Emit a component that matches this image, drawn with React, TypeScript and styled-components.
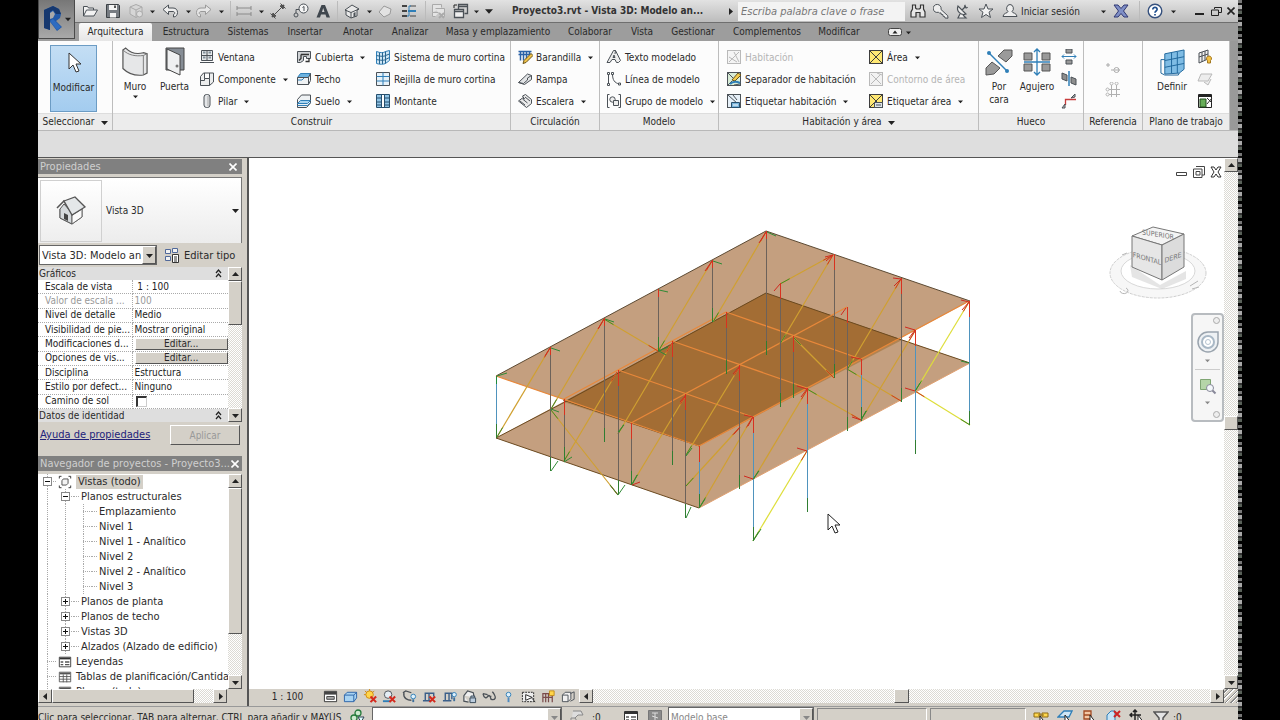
import React from "react";
import styled, { createGlobalStyle, css } from "styled-components";

const Global = createGlobalStyle`
  * { box-sizing: border-box; }
  html, body { margin: 0; height: 100%; overflow: hidden; background: #000; }
  body, button, input, select, table {
    font-family: "DejaVu Sans Condensed", "DejaVu Sans", "Noto Sans", sans-serif;
    font-size: 11px; color: #2a2a2a;
  }
  button { border: 0; padding: 0; margin: 0; background: none; }
  ul { list-style: none; margin: 0; padding: 0; }
  svg { display: block; flex: none; }
`;

/* ---------- icons ---------- */

const K = "#4b5157";
const B = "#2f7fb8";
const L = "#a9d4f0";
const G = "#b9b9b9";
const pane = (c: string, f: string) => <rect x="1.5" y="1.5" width="13" height="13" fill={f} stroke={c} />;

const icons: Record<string, React.ReactNode> = {
  open: <path d="M1.500 13V3.500h4l1 1.500h5v2M1.500 13l3-6h11l-3.500 6z" fill="#f2f2f2" stroke={K} />,
  save: <><path d="M1.500 1.500h12l1 1v12h-13z" fill="#777c82" stroke="#3d4246" /><path d="M4 2h8v5H4zM5 10h6v4.500H5z" fill="#f4f4f4" /><path d="M9 2.500h2V5H9z" fill="#555" /></>,
  box: <><path d="M8 1.500l6 2.500v7l-6 3.500-6-3.500V4z" fill="#d6d6d6" stroke="#aaa" /><path d="M2 4l6 3 6-3M8 7v7.500" fill="none" stroke="#aaa" /><circle cx="11.500" cy="11" r="3" fill="#ddd" stroke="#aaa" /></>,
  undo: <path d="M1 6.500L6.500 2v3H11c3 0 4.500 2 4.500 4.500S14 14 11.500 14v-2.500c2-.5 1.500-3-.5-3H6.500v3z" fill="#eee" stroke={K} />,
  redo: <path d="M15 6.500L9.500 2v3H5C2 5 .5 7 .5 9.500S2 14 4.500 14v-2.500c-2-.5-1.500-3 .5-3h4.500v3z" fill="#e6e6e6" stroke="#9a9a9a" />,
  dim: <path d="M1 5h14M1 3v4M15 3v4M1 11h14M1 9v4M15 9v4" stroke="#8a8a8a" fill="none" />,
  measure: <path d="M4 12l8-8M2 14l1-4 3 3zM14 2l-1 4-3-3zM0.500 10.500l5 5M10.500 .5l5 5" stroke="#4c4c4c" fill="#555" />,
  tag: <><circle cx="10.500" cy="5.500" r="4.500" fill="#f4f4f4" stroke={K} /><path d="M9.500 4.500l1.500-1V8M6 6.500H3V10" stroke={K} fill="none" /><circle cx="3" cy="12" r="2" fill="none" stroke={K} /></>,
  letter: <path d="M1.500 14.500L6.500 2h3.500L15 14.500h-3.500l-1-3H6l-1 3zM7 9h2.500L8.200 5z" fill="#3f464d" fillRule="evenodd" />,
  home: <><path d="M1 7l7-5 7 4-2 1v6l-6 2-5-3V7z" fill="#e8e8e8" stroke={K} /><path d="M1 7l6 2.500L15 6M7 9.500V15" stroke={K} fill="none" /><path d="M9.500 14v-4l2-1v4.500z" fill={K} /></>,
  diamond: <path d="M2 9l5-6 7 3-1 5-6 3z" fill="#e2e2e2" stroke="#9a9a9a" />,
  lines: <><path d="M1 3h5M1 8h5M1 13h5" stroke="#444" strokeWidth="2" /><path d="M9 3h6M9 13h6" stroke="#444" /><path d="M7 8h8" stroke={B} strokeWidth="2" /><path d="M6 13h2V3h2" stroke={B} fill="none" /></>,
  closeWin: <><path d="M2.500 9.500v-8h9v3M5.500 13.500h-3v-4h6M5.500 5.500h9v8h-4" fill="#e4e4e4" stroke="#aaa" /><path d="M9 10l5 5M14 10l-5 5" stroke="#aaa" strokeWidth="2" /></>,
  switchWin: <><path d="M1.500 6.500h9v8h-9zM1.500 8.500h9" fill="#eee" stroke={K} strokeWidth="1.300" /><path d="M5.500 6V1.500h9v9h-3M5.500 3.500h9" fill="none" stroke={K} strokeWidth="1.300" /><path d="M1 5V2h3" stroke="#222" fill="none" /></>,
  binoculars: <path d="M2.500 2h3v3l1 1h3l1-1V2h3v4l1.500 3v5h-5V9.500H6V14H1V9l1.500-3z" fill="#e8e8e8" stroke="#333" strokeWidth="1.200" />,
  key: <path d="M8 6.500a4 4 0 1 0-2.500 2.700l1 1 1.500-.3.300 1.600 1.500 0 .3 1.800 1.400.2.500 1.500 3 .2-.3-2.500z" fill="#eee" stroke={K} />,
  dish: <path d="M3 3c-2 5 3 10 8 8zM7 7l4-4M10.500 2a1.500 1.500 0 1 0 2 2M5 11l-2 4h8l-3-3" fill="#eee" stroke={K} strokeWidth="1.200" />,
  star: <path d="M8 1l2 5h5l-4 3.200 1.500 5.300L8 11.500l-4.500 3L5 9.200 1 6h5z" fill="#f2f2f2" stroke={K} />,
  person: <path d="M8 1.500a3.500 4 0 0 1 2 7.200c0 1.300 5 1.300 5 4.800H1c0-3.500 5-3.500 5-4.800A3.500 4 0 0 1 8 1.500z" fill="#eee" stroke={K} />,
  exchange: <path d="M1 2h4l3 3.500L11 2h4l-4.500 6 4.500 6h-4l-3-3.500L5 14H1l4.500-6z" fill="#7f8fc6" stroke="#2f3672" />,
  help: <><circle cx="8" cy="8" r="6.800" fill="#fff" stroke="#35507d" strokeWidth="1.400" /><path d="M5.800 6.500c0-3 4.500-2.800 4.300 0C10 8 8 8 8 9.700M8 11v1.500" fill="none" stroke="#1f4f8f" strokeWidth="1.700" /></>,
  ventana: <><path d="M2.500 1.500h11v10h-11zM1 13.500h14M2.500 6.500h11M8 2v9.500" fill="#e6e9eb" stroke={K} /><path d="M4 3.500h2.500M9.500 3.500H12M4 8.500h2.500M9.500 8.500H12" stroke="#83929c" strokeWidth="2" /></>,
  componente: <path d="M1.500 5.500l3-3.500h10v9l-4 3.500h-9zM5.500 2v5.500h5V2M1.500 9.500h4v-2M10.500 7.500v7" fill="#eceded" stroke={K} />,
  pilar: <><rect x="5" y="1.500" width="6" height="13" rx="2.500" fill="#e4e6e8" stroke={K} /><path d="M9 3v10" stroke="#aaa" /></>,
  cubierta: <><path d="M1.500 2.500h13v7h-4v-2h-3v4l-3 2h-3z" fill="#d0d3d6" stroke={K} /><path d="M5 5.500h8M5 5.500v4l-2 2M13 9v3.500H9.500" stroke="#333" strokeWidth="1.300" fill="none" /></>,
  techo: <><path d="M1.500 6.500l3-4h10l-2 4z" fill="#6bb2e0" stroke={B} /><path d="M1.500 6.500h11v7h-11zM12.500 6.500l2-4v7l-2 4" fill="#eef1f3" stroke={K} /><path d="M2 9l4 0 2-2" stroke={B} fill="none" /></>,
  suelo: <><path d="M1.500 6.500l4-4.500h9v8l-4 4.500h-9z" fill="#eef1f3" stroke={K} /><path d="M1.500 10.500l3-3h10l-3 3z" fill={L} stroke={B} /><path d="M1.500 12.500h10l3-3" fill="none" stroke={B} /></>,
  sistema: <><path d="M1.500 2.500c4 1.500 7 1.500 9 0l4-1v10l-4 3c-2 1-6 1-9 0z" fill="#cfe6f5" stroke={B} /><path d="M4.500 3.500V15M7.500 3.500V15M10.500 2.500v12M1.500 6.500c4 1 8 1 9 0l4-1.500M1.500 10.500c4 1 8 1 9 0l4-2" stroke="#27658f" fill="none" /></>,
  rejilla: <><path d="M1.500 1.500h13v13h-13z" fill="#e6f1f8" stroke={K} /><path d="M8 1.500v13M1.500 5.500h13M1.500 10h13" stroke={B} fill="none" /></>,
  montante: <><path d="M1.500 1.500h13v13h-13z" fill="#8fc4e6" stroke="#27506e" /><path d="M6.500 1.500v13M9.500 1.500v13M1.500 5h13M1.500 9h5M9.500 9h5M1.500 12h13" stroke="#274f6e" /><path d="M7 2h2v12H7z" fill="#fff" /></>,
  barandilla: <><path d="M1.500 2.500h13M1.500 5.500h13M3.500 2.500v9M6.500 2.500v9M9.500 2.500v8M12.500 2.500v4" stroke="#2a62a8" fill="none" strokeWidth="1.500" /><path d="M6 14.500l1-3 7-7 2 2-7 7z" fill="#f0c24a" stroke="#6b5316" /></>,
  rampa: <><path d="M1.500 11.500l9-8.500 4 1.500v4l-7 5z" fill="#e2e4e6" stroke={K} /><path d="M1.500 11.500l5 1 4-3.500v-2l4-2.500" stroke={K} fill="none" /></>,
  escalera: <path d="M1.500 8l4-3 2 1-2-3 3-1.500 6 5v4l-5 4zM3 8l5 4M5.500 6l5 4M8 4l5 4" fill="#eaeaea" stroke={K} />,
  texto: <path d="M1 13.500L7.500 1.500h2l5 10-2 2h-2l-1.500-3H6l-2 3zM7 8.500h2L8 6zM9.500 1.500L9 5" fill="#eee" stroke={K} fillRule="evenodd" />,
  linea: <><path d="M2.500 3v10M6.500 3c0 6 2 9 7 10" stroke={K} fill="none" /><path d="M1.500 1.500h2v2h-2zM1.500 12.500h2v2h-2zM5.500 1.500h2v2h-2zM12.500 12h2v2h-2z" fill="#fff" stroke={K} /></>,
  grupo: <><path d="M3.500 1.500h-2v13h2M12.500 1.500h2v13h-2" stroke={K} fill="none" /><circle cx="6.500" cy="6.500" r="2.700" fill="#eee" stroke={K} /><path d="M7.500 7.500h5v5h-5z" fill="#eee" stroke={K} /></>,
  habitacion: <>{pane(G, "#f4f4f4")}<path d="M3 13L13 3M8 3l5 10M3 8l8 5" stroke={G} /></>,
  separador: <>{pane(K, "#d8ecd6")}<path d="M2 2l5 5M2 14l4-4M8 14l6-1" stroke={K} /><path d="M6 9l6-7 3 2-6 6z" fill="#f2cc4e" stroke="#6b5316" /><path d="M4 13c3-3 6-3 10-1" stroke={B} strokeWidth="2" fill="none" /></>,
  etiquetar: <>{pane(K, "#e6f0f8")}<path d="M2 2l10 9M7 2l4 5" stroke={K} /><path d="M5.500 9.500h8v5h-8z" fill="#78b4dc" stroke="#27506e" /><path d="M7 12h5" stroke="#fff" /></>,
  area: <>{pane("#3d3d3d", "#ffe873")}<path d="M2 2l12 12M14 2L2 14" stroke="#3d3d3d" /></>,
  contorno: <>{pane(G, "#f2f2f2")}<path d="M3 3l5 5 5-5M3 13l5-5 5 5M9 2l5 2" stroke={G} fill="none" /></>,
  etiquetarArea: <>{pane("#3d3d3d", "#ffe873")}<path d="M2 2l12 12M14 2L2 14" stroke="#3d3d3d" /><path d="M6.500 9.500h8v5h-8z" fill="#dfe5ea" stroke={K} /><path d="M8 12h5" stroke={K} /></>,
  buhardilla: <><path d="M4.500 12V6.500H15" stroke="#c83c3c" fill="none" strokeWidth="1.300" /><path d="M1 15l3-4v4zM10 5l4-4v3z" fill="#bbb" stroke={K} /></>,
  muroHueco: <><path d="M5 0h6v4H5zM5 11h6v4H5z" fill="#999" stroke={K} /><path d="M1 7.500h14M3 5.500l-2 2 2 2M13 5.500l2 2-2 2" stroke={B} fill="none" /></>,
  vertical: <><path d="M1 2l5 2v6L1 8zM10 6l5 2v6l-5-2z" fill="#8e8e8e" stroke={K} /><path d="M8 0v15" stroke={B} strokeWidth="1.500" /></>,
  mostrar: <><path d="M2 4l9-3v9l-9 4zM2 8l9-3M5 3v10M8 2v9" fill="#eee" stroke={K} /><path d="M12 7a2.500 2.500 0 0 1 1.500 4.500V14h-3v-2.500A2.500 2.500 0 0 1 12 7z" fill="#f5c243" stroke="#a37820" /></>,
  planoRef: <path d="M4 3h11l-4 7H1zM7 11l4 3 3-6" fill="#ededed" stroke={G} />,
  visor: <><path d="M1.500 1.500h13v13h-13z" fill="#fff" stroke="#222" /><path d="M1.500 3h13" stroke="#222" strokeWidth="2" /><path d="M3 6h6v8H3z" fill="#67ad58" stroke="#234d1d" /><path d="M10 5l5 5M15 5l-5 6" stroke="#333" /></>,
  refLine: <><path d="M1 5h4M3 3v4M6 10h3" stroke="#aaa" fill="none" /><circle cx="11.500" cy="10" r="2.500" fill="none" stroke="#aaa" /><path d="M10 10h5" stroke="#aaa" /></>,
  refGrid: <path d="M6.500 3v12M11.500 3v12M4 7.500h11M4 12.500h11M2.500 6a1.500 1.500 0 1 0 .1 0zM2.500 11a1.500 1.500 0 1 0 .1 0zM6.500 0a1.500 1.500 0 1 0 .1 0zM11.500 0a1.500 1.500 0 1 0 .1 0z" stroke="#b0b0b0" fill="none" />,
  editType: <><path d="M1.500 2.500h5v4h-5zM8.500 1.500h5v4h-5zM1.500 9.500h5v4h-5z" fill="#f2f2f2" stroke="#51699a" /><path d="M8.500 7.500h6v8h-6zM10 10h3M10 12h3M10 14h3" fill="#fff" stroke="#333" /></>,
  views: <><path d="M1.500 4V1.500H4M12 1.500h2.500V4M14.500 12v2.500H12M4 14.500H1.500V12" fill="none" stroke="#222" /><path d="M4.500 6.500L6 4.500h5.500v5l-2 2h-5z" fill="#f4f4f4" stroke="#444" /></>,
  legend: <><path d="M1.500 2.500h13v11h-13z" fill="#fff" stroke="#333" /><path d="M2 4h12" stroke="#333" strokeWidth="2" /><path d="M3 8h3M3 11h3M8 8h5M8 11h5" stroke="#555" strokeWidth="1.500" /></>,
  sheet: <><path d="M1.500 2.500h13v11h-13zM1.500 7.500h13M1.500 10.500h13M6 5v9M10 5v9" fill="#fff" stroke="#555" /><path d="M2 4h12" stroke="#555" strokeWidth="2" /></>,
  detail: <><path d="M1.500 2.500h13v11h-13z" fill="#fff" stroke="#333" /><path d="M2 4.500h12" stroke="#444" strokeWidth="3" /><path d="M4 8h8v3H4z" fill="#aaa" stroke="#444" /></>,
  style: <><path d="M1.500 6.500l3-3h10v6l-3 4h-10z" fill="#a8d3f2" stroke="#2b62a8" /><path d="M1.500 6.500h10v7M11.500 6.500l3-3" stroke="#2b62a8" fill="none" /></>,
  sun: <><circle cx="7" cy="6" r="4" fill="#ffd54a" stroke="#d08a10" /><path d="M7 0v2M1 6h2M2 2l2 2M12 2l-2 2" stroke="#d08a10" /><path d="M8 8l6 6M14 8l-6 6" stroke="#d42a1e" strokeWidth="2.200" /></>,
  shadow: <><circle cx="6.500" cy="6" r="4" fill="#e4eef5" stroke={K} /><path d="M1 13h8" stroke={B} strokeWidth="2" /><path d="M8 8l6 6M14 8l-6 6" stroke="#d42a1e" strokeWidth="2.200" /></>,
  path: <><path d="M1 4l3-2 6 2M2 4c-1 6 4 8 8 8" fill="none" stroke={K} strokeWidth="1.400" /><circle cx="12" cy="8" r="2.500" fill="#dff0fb" stroke={B} /><path d="M11 11h2v3h-2z" fill="#3e6f9b" /></>,
  cropX: <><path d="M3.500 13V4.500h4V13M1 12.500h9M7.500 4.500h5V8" stroke="#3b5f8a" strokeWidth="1.500" fill="none" /><path d="M8 8l6 6M14 8l-6 6" stroke="#d42a1e" strokeWidth="2.200" /></>,
  cropB: <><path d="M3.500 13V4.500h4V13M1 12.500h9M7.500 4.500h3V11" stroke="#3b5f8a" strokeWidth="1.500" fill="none" /><circle cx="13" cy="6" r="2.300" fill="#dff0fb" stroke={B} /><path d="M12 9h2v4h-2z" fill="#3e6f9b" /></>,
  lock: <><path d="M2 7l4-5 6 2 1 5M2 7v6l5 1" fill="#eee" stroke={K} strokeWidth="1.300" /><path d="M8.500 9.500h6v5h-6zM9.500 9V7.500h4V9" fill="#bcd" stroke="#345" /></>,
  glasses: <path d="M1 5l5 1M1 5c1 5 4 5 5 3 1-2 3-1 3 1 0 3 4 3 5 1s-2-6-3-7M6 7l4 1" fill="none" stroke={K} strokeWidth="1.400" />,
  bulb: <><circle cx="8" cy="6" r="2.500" fill="#dff0fb" stroke={B} /><path d="M7 9h2v5H7z" fill="#4d8ac0" /></>,
  film: <><path d="M1.500 3.500h12v10h-12z" fill="#eee" stroke="#222" strokeDasharray="2 1" /><path d="M5 6l7 3-7 3zM12 10l3 4" fill="#fff" stroke="#222" /></>,
  analytic: <><path d="M2 14V5h10v9M5 5v9M8 5v9M2 9h10" fill="none" stroke="#7a4a4a" strokeWidth="1.300" /><path d="M9 2h5v5H9z" fill="#ffd54a" stroke="#c38d1a" /></>,
  cubes: <><path d="M1.500 6.500l3-3h6v7l-3 3h-6zM1.500 6.500h6v7" fill="#f0f0f0" stroke={K} /><path d="M10 5l4-2v8l-4 2" fill="none" stroke={K} /></>,
  sync: <><circle cx="8" cy="4" r="3" fill="#cfe9cf" stroke="#257a3b" strokeWidth="1.300" /><circle cx="4" cy="9" r="3" fill="#cfe9cf" stroke="#257a3b" strokeWidth="1.300" /><path d="M8 8h6l-3 5z" fill="#dff" stroke="#345" /></>,
  cursorTag: <path d="M4 2h8l2 4H9l-3 3H2v5M6 9l4 6" fill="#ddd" stroke="#888" />,
  book: <><path d="M1.500 1.500h13v13h-13z" fill="#8b8b8b" stroke="#777" /><path d="M5 4h6M5 7l6 2M8 4v9" stroke="#ddd" /></>,
  selLink: <><path d="M1 4h6v4H1zM9 4h6v4H9zM5 6h6" fill="#ffd84f" stroke="#8e6b12" /><path d="M7 7v9l2-2 4 1z" fill="#fff" stroke="#222" /></>,
  selUnder: <><path d="M1 8l6-6h8l-3 6zM3 12h6" fill="#cfe6f5" stroke={B} strokeWidth="1.300" /><path d="M8 6v9l2-2 4 1z" fill="#fff" stroke="#222" /></>,
  selPin: <><path d="M3 2h7v8H3zM1 12h9M3 6h7" fill="#f3c8a6" stroke="#a24b22" strokeWidth="1.300" /><path d="M9 6v9l2-2 4 1z" fill="#fff" stroke="#222" /></>,
  selFace: <><path d="M2 14V6l4-4h4v9l-4 4z" fill="#c6e3f5" stroke={B} /><path d="M9 2l6 6M15 2L9 8" stroke="#cc2424" strokeWidth="2" /></>,
  drag: <><path d="M6 1v11M1 6h11M4 3l2-2 2 2M3 4L1 6l2 2" stroke="#222" strokeWidth="1.500" fill="none" /><path d="M9 6v9l2-2 4 1z" fill="#fff" stroke="#222" /></>,
  filter: <path d="M1 3h14l-5 6v6l-4-2V9z" fill="#e4e4e4" stroke="#555" strokeWidth="1.500" />,
};

const Icon = ({ n, size = 16 }: { n: string; size?: number }) => (
  <svg width={size} height={size} viewBox="0 0 16 16" aria-hidden="true">{icons[n]}</svg>
);

type Dir = "down" | "up" | "left" | "right";
const dirs: Record<Dir, string> = { down: "M0 2h7L3.500 6z", up: "M0 5h7L3.500 1z", left: "M5 0v7L1 3.500z", right: "M2 0v7l4-3.500z" };
const Caret = ({ dir = "down", size = 7, color = "#222" }: { dir?: Dir; size?: number; color?: string }) => (
  <svg width={size} height={size} viewBox="0 0 7 7" aria-hidden="true"><path d={dirs[dir]} fill={color} /></svg>
);

/* ---------- frame ---------- */

const Screen = styled.div`
  display: flex; height: calc(100vh + 7px); padding-right: 38px; padding-left: 38px; background: #000;
`;
const AppWindow = styled.div`
  flex: 1; min-width: 0; display: flex; flex-direction: column; background: #dedede;
`;
const EdgeNoise = styled.div`
  flex: 0 0 4px;
  background: repeating-linear-gradient(#777 0 3px, #111 3px 5px, #aaa 5px 9px, #333 9px 11px, #586058 11px 14px, #000 14px 17px);
`;

const Header = styled.header`display: flex; height: 41px; background: #9d9d9d;`;
const AppButton = styled.button`
  flex: 0 0 37px; height: 39px; display: flex; align-items: center; justify-content: center; gap: 2px;
  background: linear-gradient(#777, #a9a9a9); border: 1px solid #4a4a4a; border-top: 0;
`;
const HeaderRows = styled.div`flex: 1; min-width: 0; display: flex; flex-direction: column;`;
const TitleBar = styled.div`
  display: flex; align-items: center; height: 23px; padding-left: 4px;
  background: linear-gradient(#e2e2e2, #bcbcbc); border-bottom: 1px solid #6f6f6f;
`;
const BarButton = styled.button<{ $w: number }>`
  flex: 0 0 ${(p) => p.$w}px; height: 20px; display: flex; align-items: center; justify-content: center;
`;
const BarDivider = styled.span<{ $w: number }>`
  flex: 0 0 ${(p) => p.$w}px; height: 20px; background: linear-gradient(#bbb, #bbb) center / 1px 100% no-repeat;
`;
const Title = styled.h1`
  flex: 1; min-width: 0; margin: 0 6px 0 13px; font-size: 10px; line-height: 20px; font-weight: bold; color: #333;
  white-space: nowrap; overflow: hidden;
`;
const Search = styled.input`
  flex: 0 0 167px; height: 19px; border: 0; padding: 0 3px; font-size: 11px; font-style: italic; background: #f3f3f3;
  &::placeholder { color: #777; opacity: 1; }
`;
const SignIn = styled.button`
  flex: 0 0 101px; display: flex; align-items: center; gap: 3px; padding-left: 5px; font-size: 10px; height: 20px;
`;
const WindowButtons = styled.div`display: flex; flex: 0 0 58px; padding-left: 12px;`;

const TabRow = styled.nav`
  display: flex; align-items: flex-end; height: 18px;
`;
const Tab = styled.button<{ $w: number; $active?: boolean }>`
  flex: 0 0 ${(p) => p.$w}px; height: 18px; font-size: 10px; line-height: 18px; white-space: nowrap;
  ${(p) => p.$active && css`background: linear-gradient(#fafafa, #e6e6e6); border-radius: 2px 2px 0 0;`}
`;
const TabToggle = styled.button`
  display: flex; align-items: center; gap: 4px; height: 18px; margin-left: 20px;
`;

/* ---------- ribbon ---------- */

const Ribbon = styled.div`
  display: flex; height: 90px; border-bottom: 1px solid #b8b8b8; background: linear-gradient(90deg, #c8c8c8, #999);
`;
const PanelBox = styled.section<{ $w: number; $grow?: boolean }>`
  flex: ${(p) => (p.$grow ? 1 : 0)} 0 ${(p) => p.$w}px; display: flex; flex-direction: column; background: #fcfcfc;
  border-right: 1px solid #bdbdbd;
`;
const PanelBody = styled.div<{ $left: number }>`
  flex: 1; display: flex; padding: 4px 0 0 ${(p) => p.$left}px;
`;
const PanelName = styled.h2`
  margin: 0; height: 17px; font-size: 10px; line-height: 14px; font-weight: normal; background: #ececec; border-top: 1px solid #ddd;
  display: flex; align-items: center; justify-content: center; gap: 6px; white-space: nowrap;
`;
const ToolColumn = styled.div<{ $w: number; $top?: number }>`
  flex: 0 0 ${(p) => p.$w}px; display: flex; flex-direction: column; padding-top: ${(p) => p.$top ?? 1}px;
`;
const Tool = styled.button`
  height: 22px; display: flex; align-items: center; gap: 3px; font-size: 10px; white-space: nowrap; text-align: left;
  &:disabled { color: #b4b4b4; }
`;
const ToolArrow = styled.span`padding-left: 4px;`;
const BigTool = styled.button<{ $w: number; $on?: boolean }>`
  flex: 0 0 ${(p) => p.$w}px; height: 67px; display: flex; flex-direction: column; align-items: center; font-size: 10px;
  line-height: 13px; gap: 1px;
  ${(p) => p.$on && css`background: linear-gradient(#c4def4, #a3ccef); border: 1px solid #6c9cc4;`}
`;
const BigArt = styled.span`height: 34px; display: flex; align-items: center; justify-content: center;`;
const OptionsBar = styled.div`height: 27px; flex: none; border-bottom: 1px solid #555;`;

type ToolDef = { n: string; t?: string; arrow?: boolean; off?: boolean };
const Tools = ({ w, items }: { w: number; items: ToolDef[] }) => (
  <ToolColumn $w={w}>
    {items.map((i) => (
      <Tool key={i.n} disabled={i.off} aria-label={i.t ?? i.n}>
        <Icon n={i.n} />{i.t}{i.arrow && <ToolArrow><Caret size={5} /></ToolArrow>}
      </Tool>
    ))}
  </ToolColumn>
);

const Panel = ({ name, w, left, more, grow, children }: {
  name: string; w: number; left: number; more?: boolean; grow?: boolean; children: React.ReactNode;
}) => (
  <PanelBox $w={w} $grow={grow}>
    <PanelBody $left={left}>{children}</PanelBody>
    <PanelName>{name}{more && <Caret />}</PanelName>
  </PanelBox>
);

/* ---------- classic controls ---------- */

const raised = css`
  background: #d4d0c8; border: 1px solid; border-color: #fff #555 #555 #fff;
`;
const hatch = css`background: repeating-conic-gradient(#fff 0 25%, #dcdad4 0 50%) 0 0 / 2px 2px;`;
const VTrack = styled.div<{ $w?: number }>`
  flex: 0 0 ${(p) => p.$w ?? 14}px; display: flex; flex-direction: column; ${hatch}
`;
const HTrack = styled.div`flex: 1; min-width: 0; display: flex; height: 14px; ${hatch}`;
const ArrowButton = styled.button`
  flex: 0 0 14px; min-width: 14px; display: flex; align-items: center; justify-content: center; ${raised}
`;
const Space = styled.span<{ $grow: number }>`flex: ${(p) => p.$grow} 1 0;`;
const Thumb = styled.span<{ $size: number }>`flex: 0 0 ${(p) => p.$size}px; ${raised}`;

/* ---------- left side ---------- */

const Work = styled.div`flex: 1; min-height: 0; display: flex; background: #d4d0c8;`;
const Side = styled.aside`
  flex: 0 0 211px; min-width: 0; display: flex; flex-direction: column; padding: 1px 5px 0 0; border-right: 2px solid #555; min-height: 0;
`;
const PaletteTitle = styled.h3`
  margin: 0; height: 15px; flex: none; display: flex; align-items: center; justify-content: space-between; padding: 0 3px 0 2px;
  background: #808080; color: #cfcfcf; font-size: 11px; line-height: 15px; font-weight: normal; white-space: nowrap;
`;
const CloseButton = styled.button`width: 12px; height: 12px; display: flex; align-items: center; justify-content: center;`;
const TypeSelector = styled.button`
  height: 66px; flex: none; margin-top: 3px; display: flex; align-items: center; padding: 2px; gap: 4px; text-align: left; font-size: 10px;
  background: linear-gradient(#fff, #ececec); border: 1px solid #777; border-width: 1px 1px 0 0;
`;
const TypeThumb = styled.span`
  width: 62px; height: 62px; display: flex; align-items: center; justify-content: center; border: 1px solid #d0d0d0;
  background: linear-gradient(#fff, #eee);
`;
const Fill = styled.span`flex: 1;`;
const InstanceRow = styled.div`display: flex; align-items: center; height: 24px; flex: none; padding: 2px 0 2px 1px;`;
const Combo = styled.label<{ $w: number }>`
  flex: 0 0 ${(p) => p.$w}px; height: 20px; display: flex; background: #fff; border: 1px solid #666;
`;
const ComboSelect = styled.select<{ $dim?: boolean }>`
  flex: 1; min-width: 0; appearance: none; border: 0; padding: 0 0 0 2px; background: #fff; font-size: 11px;
  ${(p) => p.$dim && css`color: #888; font-size: 10px;`}
`;
const EditType = styled.button`display: flex; align-items: center; gap: 4px; padding-left: 7px; font-size: 11px; white-space: nowrap;`;
const PropsArea = styled.div`display: flex; flex: none; height: 155px; overflow: hidden;`;
const PropsList = styled.div`flex: 1; min-width: 0; background: #fff;`;
const GroupRow = styled.div`
  height: 13px; display: flex; align-items: center; justify-content: space-between; padding: 0 6px 0 1px; background: #dedede; font-size: 10px;
  line-height: 13px;
`;
const PropTable = styled.table`
  width: 100%; height: 129px; border-collapse: collapse; table-layout: fixed; font-size: 10px; line-height: 12px;
`;
const PropName = styled.th<{ $dim?: boolean }>`
  width: 94px; padding: 0 0 0 7px; text-align: left; font-weight: normal; white-space: nowrap; overflow: hidden;
  border-bottom: 1px dotted #aaa; border-right: 1px dotted #aaa; color: ${(p) => (p.$dim ? "#999" : "#222")};
`;
const PropValue = styled.td<{ $dim?: boolean }>`
  padding: 0 0 0 2px; border-bottom: 1px dotted #aaa; color: ${(p) => (p.$dim ? "#999" : "#222")};
`;
const EditButton = styled.button`display: block; width: 100%; height: 12px; font-size: 10px; line-height: 10px; ${raised}`;
const Check = styled.input`
  appearance: none; display: block; width: 11px; height: 11px; margin: 0 0 0 1px; background: #fff; border: solid #333; border-width: 2px 1px 1px 2px;
  border-right-color: #ccc; border-bottom-color: #ccc;
`;
const HelpRow = styled.div`
  height: 34px; flex: none; display: flex; align-items: flex-start; justify-content: space-between; padding: 3px 2px 0 2px;
`;
const HelpLink = styled.a`color: #22227a; line-height: 19px; font-size: 11px;`;
const Apply = styled.button`width: 70px; height: 20px; font-size: 10px; ${raised} &:disabled { color: #999; }`;

const Browser = styled.div`flex: 1; min-height: 0; margin-top: 3px; display: flex; background: #fff;`;
const Tree = styled.ul`flex: 1; min-width: 0; overflow: hidden;`;
const TreeItem = styled.li`display: flex; height: 15px; align-items: center; white-space: nowrap; font-size: 11px;`;
const Guide = styled.span<{ $v?: boolean; $h?: boolean; $w?: number }>`
  flex: 0 0 ${(p) => p.$w ?? 18}px; height: 15px; display: flex; align-items: center; justify-content: center;
  background-image: ${(p) => [
    p.$v ? "repeating-linear-gradient(#aaa 0 1px, transparent 1px 2px)" : "none",
    p.$h ? "repeating-linear-gradient(90deg, #aaa 0 1px, transparent 1px 2px)" : "none",
  ].join(",")};
  background-size: 1px 100%, ${(p) => (p.$w ? "100%" : "50%")} 1px;
  background-position: center, right center;
  background-repeat: no-repeat;
`;
const TreeLabel = styled.span<{ $sel?: boolean }>`
  line-height: 14px; padding: 0 2px; ${(p) => p.$sel && css`background: #d4d0c8; margin-left: 2px;`}
`;
const BrowserFoot = styled.div`flex: none; display: flex; height: 17px; padding-bottom: 3px;`;
const FootCorner = styled.span`flex: 0 0 15px;`;

const PlusBox = ({ open }: { open?: boolean }) => (
  <svg width="9" height="9" viewBox="0 0 9 9"><rect x=".5" y=".5" width="8" height="8" fill="#fff" stroke="#888" />
    <path d={open ? "M2 4.500h5" : "M2 4.500h5M4.500 2v5"} stroke="#111" /></svg>
);

type Node = { t: string; lv: 0 | 1 | 2; box?: "open" | "closed"; icon?: string; sel?: boolean };
const nodes: Node[] = [
  { t: "Vistas (todo)", lv: 0, box: "open", icon: "views", sel: true },
  { t: "Planos estructurales", lv: 1, box: "open" },
  { t: "Emplazamiento", lv: 2 }, { t: "Nivel 1", lv: 2 }, { t: "Nivel 1 - Analítico", lv: 2 },
  { t: "Nivel 2", lv: 2 }, { t: "Nivel 2 - Analítico", lv: 2 }, { t: "Nivel 3", lv: 2 },
  { t: "Planos de planta", lv: 1, box: "closed" }, { t: "Planos de techo", lv: 1, box: "closed" },
  { t: "Vistas 3D", lv: 1, box: "closed" }, { t: "Alzados (Alzado de edificio)", lv: 1, box: "closed" },
  { t: "Leyendas", lv: 0, icon: "legend" }, { t: "Tablas de planificación/Cantida", lv: 0, icon: "sheet" },
  { t: "Planos (todo)", lv: 0, icon: "sheet" },
];

const properties: { k: string; v: string; kind?: "edit" | "check" | "dim" }[] = [
  { k: "Escala de vista", v: "\u00a01 : 100" }, { k: "Valor de escala  ...", v: "100", kind: "dim" },
  { k: "Nivel de detalle", v: "Medio" }, { k: "Visibilidad de pie...", v: "Mostrar original" },
  { k: "Modificaciones d...", v: "Editar...", kind: "edit" }, { k: "Opciones de vis...", v: "Editar...", kind: "edit" },
  { k: "Disciplina", v: "Estructura" }, { k: "Estilo por defect...", v: "Ninguno" }, { k: "Camino de sol", v: "", kind: "check" },
];

const Collapse = () => <svg width="7" height="9" viewBox="0 0 7 9"><path d="M1 4l2.500-3L6 4M1 8l2.500-3L6 8" fill="none" stroke="#222" strokeWidth="1.200" /></svg>;
const Cross = ({ c = "#fff" }) => <svg width="8" height="8" viewBox="0 0 8 8"><path d="M.5.5l7 7M7.500.5l-7 7" stroke={c} strokeWidth="1.600" /></svg>;

const SidePanels = () => (
  <Side>
    <PaletteTitle>Propiedades<CloseButton aria-label="Cerrar"><Cross /></CloseButton></PaletteTitle>
    <TypeSelector>
      <TypeThumb>
        <svg width="32" height="32" viewBox="0 0 32 32">
          <path d="M5 14v9l12 6 10-7v-9" fill="#f7f7f7" stroke="#666" />
          <path d="M5 14l4-5 8 9v11L5 23z" fill="#d5d9dc" stroke="#555" />
          <path d="M17 20v9l10-7v-8z" fill="#fafafa" stroke="#666" />
          <path d="M2 13l7-7 8 12" fill="none" stroke="#555" strokeWidth="1.500" /><path d="M9 6l11-4 10 10-13 8z" fill="#e4e7e9" stroke="#555" strokeWidth="1.300" />
          <path d="M9 18l4 2v6l-4-2z" fill="#444" />
        </svg>
      </TypeThumb>
      Vista 3D<Fill /><Caret />
    </TypeSelector>
    <InstanceRow>
      <Combo $w={117}>
        <ComboSelect aria-label="Vista"><option>Vista 3D: Modelo an</option></ComboSelect>
        <ArrowButton as="span"><Caret /></ArrowButton>
      </Combo>
      <EditType><Icon n="editType" />Editar tipo</EditType>
    </InstanceRow>
    <PropsArea>
      <PropsList>
        <GroupRow>Gráficos<Collapse /></GroupRow>
        <PropTable>
          <tbody>
            {properties.map((p) => (
              <tr key={p.k}>
                <PropName scope="row" $dim={p.kind === "dim"}>{p.k}</PropName>
                <PropValue $dim={p.kind === "dim"}>
                  {p.kind === "edit" ? <EditButton>{p.v}</EditButton>
                    : p.kind === "check" ? <Check type="checkbox" aria-label={p.k} /> : p.v}
                </PropValue>
              </tr>
            ))}
          </tbody>
        </PropTable>
        <GroupRow>Datos de identidad<Collapse /></GroupRow>
      </PropsList>
      <VTrack>
        <ArrowButton aria-label="Subir"><Caret dir="up" /></ArrowButton>
        <Thumb $size={44} /><Space $grow={1} />
        <ArrowButton aria-label="Bajar"><Caret /></ArrowButton>
      </VTrack>
    </PropsArea>
    <HelpRow><HelpLink href="#ayuda">Ayuda de propiedades</HelpLink><Apply disabled>Aplicar</Apply></HelpRow>
    <PaletteTitle>Navegador de proyectos - Proyecto3...<CloseButton aria-label="Cerrar"><Cross /></CloseButton></PaletteTitle>
    <Browser>
      <Tree>
        {nodes.map((n) => (
          <TreeItem key={n.t}>
            <Guide $v $h={n.lv === 0}>{n.lv === 0 && n.box && <PlusBox open />}</Guide>
            {n.lv === 0 && n.icon && <Guide><Icon n={n.icon} size={14} /></Guide>}
            {n.lv > 0 && <Guide $v $h={n.lv === 1}>{n.lv === 1 && <PlusBox open={n.box === "open"} />}</Guide>}
            {n.lv === 2 && <Guide $v $h />}
            {n.lv > 0 && <Guide $h $w={5} />}
            <TreeLabel $sel={n.sel}>{n.t}</TreeLabel>
          </TreeItem>
        ))}
      </Tree>
      <VTrack>
        <ArrowButton aria-label="Subir"><Caret dir="up" /></ArrowButton>
        <Thumb $size={146} /><Space $grow={1} />
        <ArrowButton aria-label="Bajar"><Caret /></ArrowButton>
      </VTrack>
    </Browser>
    <BrowserFoot>
      <HTrack>
        <ArrowButton aria-label="Izquierda"><Caret dir="left" /></ArrowButton>
        <Thumb $size={142} /><Space $grow={1} />
        <ArrowButton aria-label="Derecha"><Caret dir="right" /></ArrowButton>
      </HTrack>
      <FootCorner />
    </BrowserFoot>
  </Side>
);

/* ---------- 3D view ---------- */

const ViewColumn = styled.main`flex: 1; min-width: 0; display: flex; flex-direction: column;`;
const ViewMain = styled.div`flex: 1; min-height: 0; display: flex;`;
const Canvas = styled.div`flex: 1; min-width: 0; position: relative; overflow: hidden; background: #fff;`;
const ViewButtons = styled.div`position: absolute; top: 8px; right: 2px; display: flex; gap: 5px;`;
const CubeSpot = styled.div`position: absolute; top: 64px; right: 16px;`;
const NavBar = styled.div`
  position: absolute; top: 155px; right: 0; width: 33px; height: 109px; padding: 2px; display: flex; flex-direction: column; align-items: center;
  justify-content: space-between; border: 2px solid #b8bcc0; border-radius: 4px; background: #f6f6f6;
`;
const NavDot = styled.button`width: 7px; height: 7px; align-self: flex-end; border: 1px solid #aaa; border-radius: 50%; background: #eee;`;
const NavButton = styled.button`display: flex; flex-direction: column; align-items: center; gap: 5px;`;
const NavRule = styled.span`width: 25px; height: 1px; background: #ccc;`;
const ViewBar = styled.div`
  flex: none; display: flex; height: 17px; padding-bottom: 3px; background: #d4d0c8;
`;
const ViewControls = styled.div`flex: 0 0 330px; display: flex; align-items: center; font-size: 10px;`;
const Scale = styled.button`flex: 0 0 74px; font-size: 10px; padding-left: 3px;`;
const ControlIcons = styled.div`flex: 0 0 253px; display: flex; justify-content: space-between;`;
const Grip = styled.span`
  flex: 0 0 14px; background: repeating-linear-gradient(135deg, #d4d0c8 0 2px, #888 2px 3px, #fff 3px 4px);
`;

const at = (i: number, j: number): [number, number] => [Math.round(496 + 54 * i + 67.7 * j), Math.round(376 - 29 * i + 23.3 * j)];

const columns: [number, number, number][] = [
  [0, 0, 62], [1, 0, 124], [2, 0, 124], [3, 0, 62], [4, 0, 62], [5, 0, 124],
  [0, 1, 62], [1, 1, 124], [2, 1, 124], [3, 1, 62], [4, 1, 124], [5, 1, 124],
  [0, 2, 62], [1, 2, 124], [2, 2, 124], [3, 2, 62], [4, 2, 124], [5, 2, 124],
  [0, 3, 62], [1, 3, 124], [2, 3, 124], [3, 3, 62], [4, 3, 124], [5, 3, 124],
];

const braces: [number, number, number, number][] = [
  [497, 437, 550, 348], [551, 409, 604, 319], [604, 319, 658, 351], [659, 350, 712, 261], [713, 322, 766, 232],
  [564, 461, 617, 372], [551, 410, 618, 495], [632, 484, 686, 395], [700, 507, 752, 418], [753, 480, 807, 390],
  [753, 541, 807, 451], [807, 389, 861, 420], [861, 420, 915, 331], [847, 369, 901, 401], [970, 425, 915, 391],
  [916, 390, 969, 302], [847, 370, 901, 279], [780, 344, 833, 255], [780, 284, 833, 255], [793, 337, 834, 378],
  [686, 486, 740, 427], [618, 434, 672, 343], [686, 455, 740, 366],
];

const edges: [number, number, number, number][] = [
  [0, 0, 0, 3], [0, 3, 5, 3], [1, 1, 1, 3], [2, 1, 2, 3], [3, 1, 3, 3], [0, 1, 3, 1], [0, 2, 4, 2],
];

const Model = () => (
  <svg width="100%" height="100%" role="img" aria-label="Modelo analítico">
    <g transform="translate(-249 -158)" fill="none" strokeWidth="1">
      <path d="M496 438L766 293L970 363L699 508z" fill="#8a4000" fillOpacity=".5" />
      <path d="M496 376L766 231L970 301L699 446z" fill="#8a4000" fillOpacity=".5" />
      <path d="M564 402L766 293L902 340L699 446z" fill="#a06c2c" fillOpacity=".55" />
      <path d="M496 376L766 231L970 301" stroke="#5c4a33" />
      <path d="M496 438L563 403M496 438L699 508M902 340L970 363M563 403L766 293L902 340" stroke="#6b4a20" />
      <path d="M699 508L970 363" stroke="#e0a070" />
      <path d="M563 400L699 446" stroke="#6b4a20" />
      {edges.map((e, k) => {
        const [x1, y1] = at(e[0], e[1]);
        const [x2, y2] = at(e[2], e[3]);
        return <path key={k} d={`M${x1} ${y1}L${x2} ${y2}`} stroke="#e8883a" strokeWidth="1.300" />;
      })}
      {braces.map(([x1, y1, x2, y2], k) => {
        const len = Math.hypot(x2 - x1, y2 - y1);
        const dx = ((x2 - x1) / len) * 11;
        const dy = ((y2 - y1) / len) * 11;
        return (
          <g key={k}>
            <path d={`M${x1} ${y1}L${x2} ${y2}`} stroke={x1 > 900 || (y1 > 500 && x1 > 740) ? "#dede3a" : "#d0a030"} strokeWidth="1.200" />
            <path d={`M${x1} ${y1}l${dx} ${dy}`} stroke="#3f8a2c" />
            <path d={`M${x2} ${y2}l${-dx} ${-dy}`} stroke="#cf3a20" />
          </g>
        );
      })}
      {columns.map(([i, j, h], k) => {
        const [x, y] = at(i, j);
        const outside = j === 3 || (i === 0 && j === 0);
        const px = x + 0.5;
        return (
          <g key={k}>
            <path d={`M${px} ${y}v${h}`} stroke={outside ? "#4f93bd" : "#6d625a"} />
            <path d={`M${px} ${y}v${j === 0 ? 8 : 16}`} stroke={i === 0 && j === 0 ? "#1f8a3c" : "#d8311f"} />
            <path d={`M${px} ${y + h}v-14`} stroke="#2f7d32" />
          </g>
        );
      })}
      <path d="M497 376l10-3M551 348l9 3M605 319l9 3M659 290l9 2M713 261l9 3M767 232l9 4M551 409l8 3M551 471l7-10M618 495l-8-10M618 495l7-10M686 518l5-11M659 351l9-4M659 351l7 4M564 462l8-5M632 485l5-10M699 508l6-9M753 541l8-12M753 479l6-8M861 420l5-9M618 432l6-7M686 456l6-8M969 363l-8-2M915 391l5-8" stroke="#2f8a35" />
      <path d="M550 348l-5 8M604 319l-6 10M712 261l-7 10M766 232l-7 11M833 255l-8 2M833 255l-7 6M901 279l-8-1M901 279l-7 7M969 302l-8-2M969 302l-7 8M915 330l-10-3M915 330l-6 8M861 359l-10-2M807 389l-10-3M807 389l-6 8M753 417l-9-2M753 417l-5 9M780 284l-6 7M846 308l-5 7M753 479l-9-3M807 451l-10-3M861 420l-9-3M915 391l-10-3M740 366l-7 8M686 395l-6 7M632 485l8-3M740 427l-6 7" stroke="#cf2a20" />
      <path d="M828 514v16l4-4 3 7 3-1-3-7h5z" fill="#fff" stroke="#222" />
    </g>
  </svg>
);

const CubeText = styled.text`font-size: 7px; fill: #777; text-anchor: middle;`;

const ViewCube = () => (
  <svg width="100" height="80" viewBox="0 0 100 80" role="img" aria-label="Cubo de vistas">
    <ellipse cx="50" cy="51" rx="48" ry="25" fill="#f7f7f7" stroke="#cfcfcf" strokeDasharray="3 1" />
    <ellipse cx="50" cy="49" rx="37" ry="18" fill="#fff" stroke="#d8d8d8" />
    <path d="M22 43l30 20 26-14v8L54 67 24 55z" fill="#ccc" opacity=".5" />
    <path d="M24 14L45 5l31 7-22 11z" fill="#f4f4f4" stroke="#777" />
    <path d="M24 14l30 9v35L24 45z" fill="#e6e6e6" stroke="#777" />
    <path d="M54 23l22-11v33L54 58z" fill="#dcdcdc" stroke="#777" />
    <CubeText transform="translate(50 15) skewY(9)">SUPERIOR</CubeText>
    <CubeText transform="translate(39 39) skewY(16)">FRONTAL</CubeText>
    <CubeText transform="translate(65 38) skewY(-20)">DERE</CubeText>
    <path d="M12 69a4 3 0 1 0 6-3M82 64l8-5M84 67l7-2M14 33l5-2" stroke="#b5b5b5" fill="none" />
  </svg>
);

const viewIcons = ["detail", "style", "sun", "shadow", "path", "cropX", "cropB", "lock", "glasses", "bulb", "film", "analytic", "cubes"];

const View = () => (
  <ViewColumn>
    <ViewMain>
      <Canvas>
        <Model />
        <ViewButtons>
          <button aria-label="Minimizar"><svg width="12" height="12" viewBox="0 0 12 12"><path d="M.5 6.500h10v3H.5z" fill="#fff" stroke="#444" /></svg></button>
          <button aria-label="Restaurar"><svg width="12" height="12" viewBox="0 0 12 12"><path d="M3 .5h8.500V9H9M.5 3h8.500v8.500H.5zM3 5.500h4v3.500H3z" fill="none" stroke="#444" /></svg></button>
          <button aria-label="Cerrar vista"><svg width="12" height="12" viewBox="0 0 12 12"><path d="M1 1h3l2 3 2-3h3L8 6l3 5H8L6 8l-2 3H1l3-5z" fill="#fff" stroke="#333" /></svg></button>
        </ViewButtons>
        <CubeSpot><ViewCube /></CubeSpot>
        <NavBar>
          <NavDot aria-label="Cerrar barra" />
          <NavButton aria-label="Rueda de navegación">
            <svg width="22" height="22" viewBox="0 0 22 22"><path d="M11 1h10v10a10 10 0 1 1-10-10z" fill="#eef1f4" stroke="#9aa4ae" strokeWidth="1.500" /><circle cx="11" cy="11" r="6" fill="#fff" stroke="#a9b8c6" strokeWidth="2" /><circle cx="11" cy="11" r="2.500" fill="none" stroke="#b5c3d0" /></svg>
            <Caret size={5} color="#888" />
          </NavButton>
          <NavRule />
          <NavButton aria-label="Zoom">
            <svg width="18" height="18" viewBox="0 0 18 18"><path d="M1.500 2.500h10v10h-10z" fill="#b5d5a8" stroke="#7fa573" /><circle cx="11" cy="11" r="3.500" fill="#f4f8fb" stroke="#889" /><path d="M13.500 13.500l3 3" stroke="#889" strokeWidth="2" /></svg>
            <Caret size={5} color="#888" />
          </NavButton>
          <NavDot aria-label="Opciones" />
        </NavBar>
      </Canvas>
      <VTrack>
        <ArrowButton aria-label="Subir"><Caret dir="up" /></ArrowButton>
        <Space $grow={243} /><Thumb $size={14} /><Space $grow={245} />
        <ArrowButton aria-label="Bajar"><Caret /></ArrowButton>
      </VTrack>
    </ViewMain>
    <ViewBar>
      <ViewControls>
        <Scale>1 : 100</Scale>
        <ControlIcons>
          {viewIcons.map((n) => <button key={n} aria-label={n}><Icon n={n} size={15} /></button>)}
        </ControlIcons>
      </ViewControls>
      <HTrack>
        <ArrowButton aria-label="Izquierda"><Caret dir="left" /></ArrowButton>
        <Space $grow={301} /><Thumb $size={15} /><Space $grow={301} />
        <ArrowButton aria-label="Derecha"><Caret dir="right" /></ArrowButton>
      </HTrack>
      <Grip />
    </ViewBar>
  </ViewColumn>
);

/* ---------- status bar ---------- */

const Status = styled.footer`
  flex: none; display: flex; align-items: center; height: 21px; background: #d4d0c8; border-top: 1px solid #999; white-space: nowrap;
`;
const Hint = styled.span`flex: 0 0 306px; overflow: hidden; font-size: 10px;`;
const StatusIcon = styled.button<{ $w: number }>`
  flex: 0 0 ${(p) => p.$w}px; display: flex; align-items: center; justify-content: center;
`;
const StatusText = styled.span<{ $w: number }>`flex: 0 0 ${(p) => p.$w}px; font-size: 10px;`;
const Sunken = styled.span<{ $w: number }>`
  flex: 1 1 ${(p) => p.$w}px; height: 18px; margin-right: 3px; border: 1px solid; border-color: #888 #fff #fff #888;
`;

const StatusBar = () => (
  <Status>
    <Hint>Clic para seleccionar, TAB para alternar, CTRL para añadir y MAYÚS</Hint>
    <StatusIcon $w={28} aria-label="Conjuntos"><Icon n="sync" /></StatusIcon>
    <Combo $w={190}>
      <ComboSelect aria-label="Subproyecto" defaultValue=""><option value="" /></ComboSelect>
      <ArrowButton as="span"><Caret color="#888" /></ArrowButton>
    </Combo>
    <StatusIcon $w={30} aria-label="Peticiones"><Icon n="cursorTag" /></StatusIcon>
    <StatusText $w={28}>:0</StatusText>
    <StatusIcon $w={22} aria-label="Opciones de diseño"><Icon n="legend" /></StatusIcon>
    <StatusIcon $w={26} aria-label="Activas"><Icon n="book" /></StatusIcon>
    <Combo $w={146}>
      <ComboSelect $dim aria-label="Opción de diseño"><option>Modelo base</option></ComboSelect>
      <ArrowButton as="span"><Caret color="#888" /></ArrowButton>
    </Combo>
    <StatusText $w={3} />
    <Sunken $w={110} /><Sunken $w={96} />
    {["selLink", "selUnder", "selPin", "selFace", "drag", "filter"].map((n) => (
      <StatusIcon key={n} $w={24} aria-label={n}><Icon n={n} /></StatusIcon>
    ))}
    <StatusText $w={65}>:0</StatusText>
  </Status>
);

/* ---------- header content ---------- */

type Bar = { n?: string; w: number; sep?: boolean; big?: boolean };
const quick: Bar[] = [
  { n: "open", w: 22 }, { n: "save", w: 24 }, { n: "box", w: 22 }, { w: 10 }, { n: "undo", w: 26 }, { w: 10 }, { n: "redo", w: 22 }, { w: 12 },
  { sep: true, w: 6 }, { n: "dim", w: 22 }, { w: 12 }, { n: "measure", w: 22 }, { n: "tag", w: 24 }, { n: "letter", w: 20 },
  { sep: true, w: 8 }, { n: "home", w: 22 }, { w: 12 }, { n: "diamond", w: 20 }, { n: "lines", w: 28 }, { sep: true, w: 4 },
  { n: "closeWin", w: 22 }, { n: "switchWin", w: 24 }, { w: 6 }, { w: 20, big: true },
];
const BarItems = ({ items }: { items: Bar[] }) => (
  <>
    {items.map((b, k) => b.sep ? <BarDivider key={k} $w={b.w} />
      : <BarButton key={k} $w={b.w} aria-label={b.n ?? "Más"}>{b.n ? <Icon n={b.n} /> : <Caret size={b.big ? 8 : 5} />}</BarButton>)}
  </>
);

const tabs: [string, number][] = [
  ["Arquitectura", 73], ["Estructura", 68], ["Sistemas", 56], ["Insertar", 58], ["Anotar", 48], ["Analizar", 56], ["Masa y emplazamiento", 120],
  ["Colaborar", 64], ["Vista", 40], ["Gestionar", 62], ["Complementos", 86], ["Modificar", 58],
];
const TabSpacer = styled.span`flex: 0 0 4px;`;

export default function App() {
  return (
    <>
      <Global />
      <Screen>
        <AppWindow>
          <Header>
            <AppButton aria-label="Menú de la aplicación">
              <svg width="21" height="28" viewBox="0 0 21 28">
                <path d="M2 5l9-4 6 3 2 5-1 4-4 3 6 6-5 4-6-8-1-1v8l-6-2z" fill="#2259a8" />
                <path d="M2 5l6 2v18l-6-2zM11 1l6 3 2 5-5 0-3-4-3 2-6-2z" fill="#16386f" /><path d="M8 8l3-2 2 3-2 4-3 1z" fill="#a9a9a9" /><path d="M8 16l3-2 8 8-4 3z" fill="#2f6cc0" />
              </svg>
              <Caret size={6} />
            </AppButton>
            <HeaderRows>
              <TitleBar>
                <BarItems items={quick} />
                <Title>Proyecto3.rvt - Vista 3D: Modelo an...</Title>
                <BarButton $w={16} aria-label="Expandir"><Caret dir="right" /></BarButton>
                <Search aria-label="Buscar" placeholder="Escriba palabra clave o frase" />
                <BarItems items={[{ n: "binoculars", w: 25 }, { n: "key", w: 21 }, { n: "dish", w: 24 }, { n: "star", w: 22 }]} />
                <SignIn><Icon n="person" />Iniciar sesión</SignIn>
                <BarItems items={[{ w: 10 }, { n: "exchange", w: 26 }, { sep: true, w: 10 }, { n: "help", w: 22 }, { w: 14 }]} />
                <WindowButtons>
                  <BarButton $w={16} aria-label="Minimizar"><svg width="10" height="10" viewBox="0 0 10 10"><path d="M0 8h9" stroke="#222" strokeWidth="2" /></svg></BarButton>
                  <BarButton $w={16} aria-label="Restaurar"><svg width="11" height="11" viewBox="0 0 11 11"><path d="M3.500 3V1.500h7v5H8M.5 4h7v5.500h-7z" fill="none" stroke="#222" /></svg></BarButton>
                  <BarButton $w={14} aria-label="Cerrar"><Cross c="#222" /></BarButton>
                </WindowButtons>
              </TitleBar>
              <TabRow>
                <TabSpacer />
                {tabs.map(([t, w], k) => <Tab key={t} $w={w} $active={k === 0}>{t}</Tab>)}
                <TabToggle aria-label="Minimizar cinta">
                  <svg width="14" height="8" viewBox="0 0 14 8"><rect x=".5" y=".5" width="13" height="7" rx="2" fill="#eee" stroke="#444" /><path d="M4.500 5.500L7 2.500l2.500 3z" fill="#222" /></svg>
                  <Caret size={5} />
                </TabToggle>
              </TabRow>
            </HeaderRows>
          </Header>

          <Ribbon>
            <Panel name="Seleccionar" w={75} left={12} more>
              <BigTool $w={47} $on>
                <BigArt><svg width="16" height="22" viewBox="0 0 16 22"><path d="M3 1v16l4-4 3 7 3-1-3-7h5z" fill="#fff" stroke="#333" /></svg></BigArt>
                Modificar
              </BigTool>
            </Panel>
            <Panel name="Construir" w={398} left={3}>
              <BigTool $w={38}>
                <BigArt><svg width="26" height="30" viewBox="0 0 28 32"><path d="M1 3l3-2c5 5 12 7 19 5l4 1v21l-4 2c-8 1-16-1-22-7z" fill="#e6e7e8" stroke="#555" strokeWidth="1.300" /><path d="M1 3c6 6 14 7 22 6l4-2M23 9v21" fill="none" stroke="#777" /></svg></BigArt>
                Muro<Caret size={5} />
              </BigTool>
              <BigTool $w={41}>
                <BigArt><svg width="20" height="30" viewBox="0 0 20 30"><path d="M1 1h18v22H1z" fill="#868d95" stroke="#444" /><path d="M2 2l13 6v20L2 22z" fill="#eff0f1" stroke="#444" /><circle cx="12" cy="19" r="1.500" fill="#777" /></svg></BigArt>
                Puerta
              </BigTool>
              <TabSpacer />
              <Tools w={97} items={[{ n: "ventana", t: "Ventana" }, { n: "componente", t: "Componente", arrow: true }, { n: "pilar", t: "Pilar", arrow: true }]} />
              <Tools w={79} items={[{ n: "cubierta", t: "Cubierta", arrow: true }, { n: "techo", t: "Techo" }, { n: "suelo", t: "Suelo", arrow: true }]} />
              <Tools w={134} items={[{ n: "sistema", t: "Sistema de muro cortina" }, { n: "rejilla", t: "Rejilla de muro cortina" }, { n: "montante", t: "Montante" }]} />
            </Panel>
            <Panel name="Circulación" w={89} left={6}>
              <Tools w={82} items={[{ n: "barandilla", t: "Barandilla", arrow: true }, { n: "rampa", t: "Rampa" }, { n: "escalera", t: "Escalera", arrow: true }]} />
            </Panel>
            <Panel name="Modelo" w={119} left={6}>
              <Tools w={112} items={[{ n: "texto", t: "Texto modelado" }, { n: "linea", t: "Línea de modelo" }, { n: "grupo", t: "Grupo de modelo", arrow: true }]} />
            </Panel>
            <Panel name="Habitación y área" w={260} left={7} more>
              <Tools w={142} items={[{ n: "habitacion", t: "Habitación", off: true }, { n: "separador", t: "Separador de habitación" }, { n: "etiquetar", t: "Etiquetar habitación", arrow: true }]} />
              <Tools w={106} items={[{ n: "area", t: "Área", arrow: true }, { n: "contorno", t: "Contorno de área", off: true }, { n: "etiquetarArea", t: "Etiquetar área", arrow: true }]} />
            </Panel>
            <Panel name="Hueco" w={105} left={2}>
              <BigTool $w={36}>
                <BigArt><svg width="28" height="28" viewBox="0 0 28 28"><path d="M13 8l6-6h8v6l-6 6zM1 20l6-6 8 6-6 6-8 1z" fill="#9a9a9a" stroke="#555" /><path d="M4 5l18 18" stroke={B} strokeWidth="1.500" /><circle cx="4" cy="5" r="2" fill={B} /><circle cx="22" cy="23" r="2" fill={B} /></svg></BigArt>
                <span>Por<br />cara</span>
              </BigTool>
              <BigTool $w={40}>
                <BigArt><svg width="28" height="28" viewBox="0 0 28 28"><path d="M1 5h8v7H1zM19 5h8v7h-8zM1 16h8v7H1zM19 16h8v7h-8z" fill="#9a9a9a" stroke="#555" /><path d="M14 1v26M11 4l3-3 3 3M11 24l3 3 3-3M1 14h26" stroke={B} fill="none" strokeWidth="1.300" /></svg></BigArt>
                Agujero
              </BigTool>
              <TabSpacer />
              <Tools w={20} items={[{ n: "muroHueco" }, { n: "vertical" }, { n: "buhardilla" }]} />
            </Panel>
            <Panel name="Referencia" w={59} left={21}>
              <ToolColumn $w={20} $top={12}>
                <Tool aria-label="Línea de referencia"><Icon n="refLine" /></Tool>
                <Tool aria-label="Rejilla de referencia"><Icon n="refGrid" /></Tool>
              </ToolColumn>
            </Panel>
            <Panel name="Plano de trabajo" w={84} left={8} grow>
              <BigTool $w={42}>
                <BigArt><svg width="27" height="29" viewBox="0 0 28 30"><path d="M6 6l20-4v20l-5 4-15 1z" fill="#7fbce4" stroke="#1f679c" /><path d="M13 5v21M19 4v22M6 13l20-4M6 20l20-4M6 12H2v14l4 2h14l1-2" stroke="#1f679c" fill="none" /></svg></BigArt>
                Definir
              </BigTool>
              <TabSpacer />
              <Tools w={20} items={[{ n: "mostrar" }, { n: "planoRef" }, { n: "visor" }]} />
            </Panel>
            <TabSpacer /><TabSpacer />
          </Ribbon>
          <OptionsBar />
          <Work>
            <SidePanels />
            <View />
          </Work>
          <StatusBar />
        </AppWindow>
        <EdgeNoise />
      </Screen>
    </>
  );
}
